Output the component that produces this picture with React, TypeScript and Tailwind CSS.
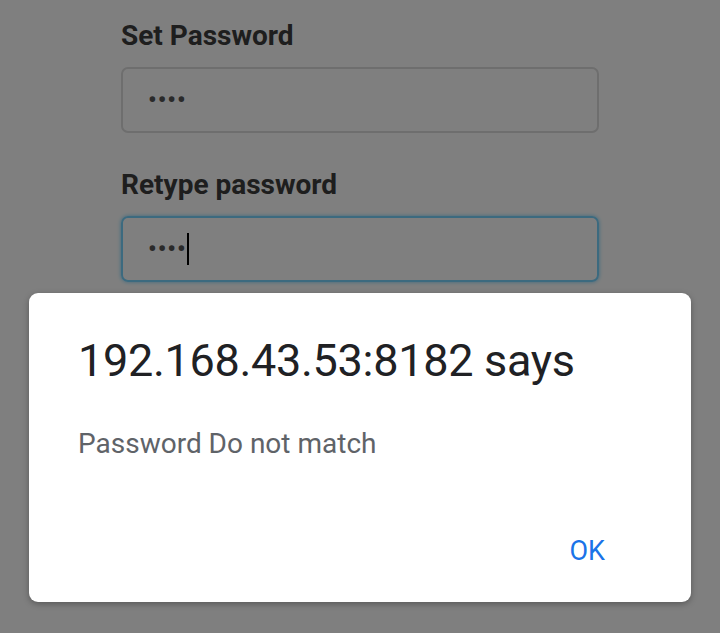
export default function App() {
  return (
    <div
      className="relative h-[633px] w-[720px] overflow-hidden bg-white"
      style={{ fontFamily: "Roboto, 'Noto Sans', sans-serif" }}
    >
      <main className="flex flex-col pl-[121px] pt-[18px] w-[599px]">
        <label className="text-[28px] font-bold leading-[36px] text-[#3c3c3c]">Set Password</label>
        <div className="mt-[13px] flex h-[66px] items-center rounded-[7px] border-2 border-[#dcdcdc] px-[25px]">
          <span className="text-[24px] font-bold tracking-[1px] text-[#555]">••••</span>
        </div>
        <label className="mt-[34px] text-[28px] font-bold leading-[36px] text-[#3c3c3c]">Retype password</label>
        <div className="mt-[13px] flex h-[66px] items-center rounded-[7px] border-2 border-[#78d4ff] px-[25px] shadow-[0_0_4px_#78d4ff]">
          <span className="text-[24px] font-bold tracking-[1px] text-[#555]">••••</span>
          <span className="h-[32px] w-[2px] bg-black" />
        </div>
      </main>

      <div className="absolute inset-0 bg-black/50" />

      <div className="absolute left-[29px] top-[293px] flex h-[309px] w-[662px] flex-col rounded-[9px] bg-white px-[49px] shadow-[0_2px_6px_rgba(0,0,0,0.3)]">
        <h2 className="mt-[40px] text-[45px] leading-[56px] tracking-[-0.3px] text-[#202124]">192.168.43.53:8182 says</h2>
        <p className="mt-[38px] text-[28px] leading-[34px] text-[#5f6368]">Password Do not match</p>
        <div className="mt-auto mb-[34px] flex justify-end">
          <button className="mr-[37px] text-[27px] leading-[34px] text-[#1a73e8]">OK</button>
        </div>
      </div>
    </div>
  );
}
